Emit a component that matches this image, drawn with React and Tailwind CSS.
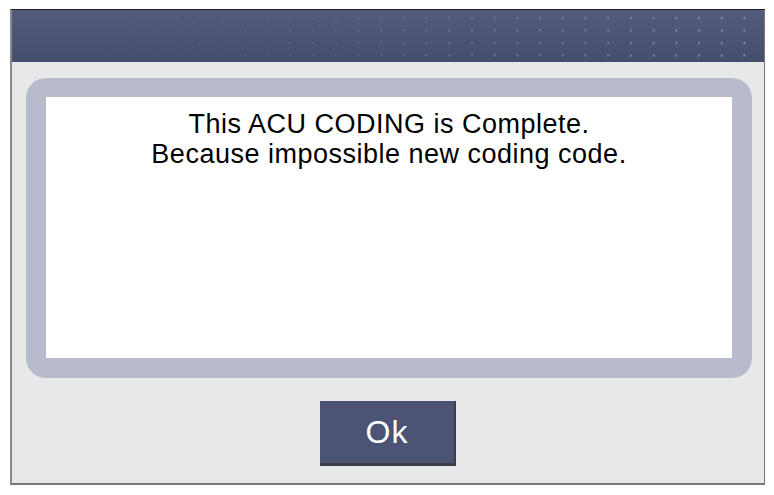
import React from "react";

const font = { fontFamily: '"Liberation Sans", Arial, sans-serif' };

function HeaderDots() {
  // faint dot grid on the title bar, fading in toward the right
  return (
    <svg className="absolute inset-0" width="753" height="52">
      <defs>
        <pattern id="dots" x="5" y="2" width="22.7" height="12.5" patternUnits="userSpaceOnUse">
          <rect x="0" y="5" width="2" height="2" fill="#8a93ad" />
        </pattern>
        <linearGradient id="fade" x1="0" x2="1" y1="0" y2="0">
          <stop offset="0" stopColor="#fff" stopOpacity="0" />
          <stop offset="0.4" stopColor="#fff" stopOpacity="0.25" />
          <stop offset="1" stopColor="#fff" stopOpacity="1" />
        </linearGradient>
        <mask id="fadeMask">
          <rect width="753" height="52" fill="url(#fade)" />
        </mask>
      </defs>
      <rect width="753" height="52" fill="url(#dots)" mask="url(#fadeMask)" />
    </svg>
  );
}

export default function App() {
  return (
    <div className="w-[774px] h-[495px] bg-white pt-[9px] pl-[10px]" style={font}>
      <div className="w-[755px] h-[476px] bg-[#e8e8e8] border-t border-t-[#222] border-l-2 border-l-[#8a8a8a] border-r border-r-[#777] border-b-2 border-b-[#777] flex flex-col">
        <div className="relative h-[52px] bg-gradient-to-b from-[#525b7b] to-[#454e6c] shrink-0">
          <HeaderDots />
        </div>

        <div className="mt-[16px] ml-[14px] w-[726px] h-[300px] bg-[#b8bbcc] rounded-[20px] p-[20px] pt-[19px]">
          <div className="w-full h-full bg-white pt-[12px] text-center text-black text-[27px] leading-[30px] tracking-[0.5px]">
            <p>This ACU CODING is Complete.</p>
            <p>Because impossible new coding code.</p>
          </div>
        </div>

        <div className="flex justify-center mt-[23px]">
          <button className="w-[136px] h-[65px] bg-[#4b5474] border-b-[3px] border-b-[#3a3e4c] border-r-2 border-r-[#3a3e4c] text-white text-[32px] font-normal tracking-[1px] flex items-center justify-center">
            Ok
          </button>
        </div>
      </div>
    </div>
  );
}
